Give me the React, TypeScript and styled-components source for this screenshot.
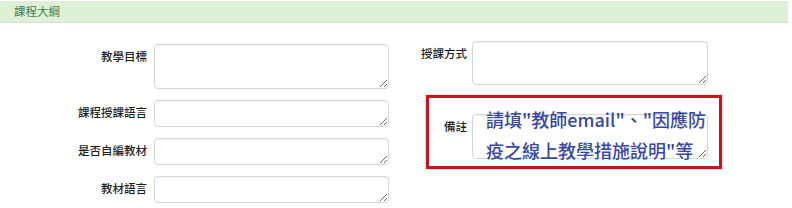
import React from "react";
import styled, { createGlobalStyle } from "styled-components";

const Global = createGlobalStyle`
  html, body { margin: 0; padding: 0; background: #ffffff; }
  body { font-family: "Noto Sans CJK TC", "Noto Sans", sans-serif; }
`;

const Page = styled.div`
  width: 792px;
  height: 208px;
  overflow: hidden;
`;

const Header = styled.div`
  margin: 1px 4px 0 0;
  height: 21px;
  border-bottom: 1px solid #d3e5c9;
  background: #dff0d8;
  color: #4a7b4a;
  font-size: 11.5px;
  line-height: 21px;
  padding-left: 14px;
  box-sizing: content-box;
`;

const Body = styled.div`
  display: grid;
  grid-template-columns: 389px 306px;
  column-gap: 27px;
  align-items: start;
`;

const Column = styled.div<{ $top: number }>`
  display: flex;
  flex-direction: column;
  gap: 11px;
  margin-top: ${(p) => p.$top}px;
`;

const Row = styled.div<{ $label: number; $gap: number }>`
  display: grid;
  grid-template-columns: ${(p) => p.$label}px auto;
  column-gap: ${(p) => p.$gap}px;
  align-items: start;
`;

const Label = styled.label`
  text-align: right;
  white-space: nowrap;
  font-size: 11.5px;
  line-height: 16px;
  padding-top: 4px;
  font-weight: 500;
  color: #1e1e1e;
`;

const Field = styled.div`
  position: relative;
`;

const Area = styled.textarea<{ $w: number; $h: number }>`
  display: block;
  box-sizing: border-box;
  width: ${(p) => p.$w}px;
  height: ${(p) => p.$h}px;
  margin: 0;
  padding: 4px 8px;
  border: 1px solid #d6d6d6;
  border-radius: 4px;
  box-shadow: inset 0 1px 1px rgba(0, 0, 0, 0.04);
  background: #ffffff;
  font-family: "Noto Sans CJK TC", sans-serif;
  font-size: 12px;
  outline: none;
`;

const Annotation = styled.div`
  margin: -1px 0 0 10px;
  border: 3px solid #c6161e;
  box-shadow: 0 0 2px rgba(198, 22, 30, 0.45);
  padding: 16px 11px 7px 0;
  width: max-content;
`;

const Note = styled.div`
  position: absolute;
  left: 14px;
  top: -10px;
  white-space: nowrap;
  font-size: 18px;
  line-height: 31px;
  font-weight: 500;
  color: #3848a8;
  pointer-events: none;
`;

export default function App() {
  return (
    <Page>
      <Global />
      <Header>課程大綱</Header>
      <Body>
        <Column $top={21}>
          <Row $label={147} $gap={7}>
            <Label>教學目標</Label>
            <Area $w={235} $h={45} />
          </Row>
          <Row $label={147} $gap={7}>
            <Label>課程授課語言</Label>
            <Area $w={235} $h={27} />
          </Row>
          <Row $label={147} $gap={7}>
            <Label>是否自編教材</Label>
            <Area $w={235} $h={27} />
          </Row>
          <Row $label={147} $gap={7}>
            <Label>教材語言</Label>
            <Area $w={235} $h={27} />
          </Row>
        </Column>
        <Column $top={18}>
          <Row $label={51} $gap={5}>
            <Label>授課方式</Label>
            <Area $w={236} $h={44} />
          </Row>
          <Annotation>
            <Row $label={38} $gap={5}>
              <Label>備註</Label>
              <Field>
                <Area $w={236} $h={45} />
                <Note>
                  請填"教師email"、"因應防
                  <br />
                  疫之線上教學措施說明"等
                </Note>
              </Field>
            </Row>
          </Annotation>
        </Column>
      </Body>
    </Page>
  );
}
